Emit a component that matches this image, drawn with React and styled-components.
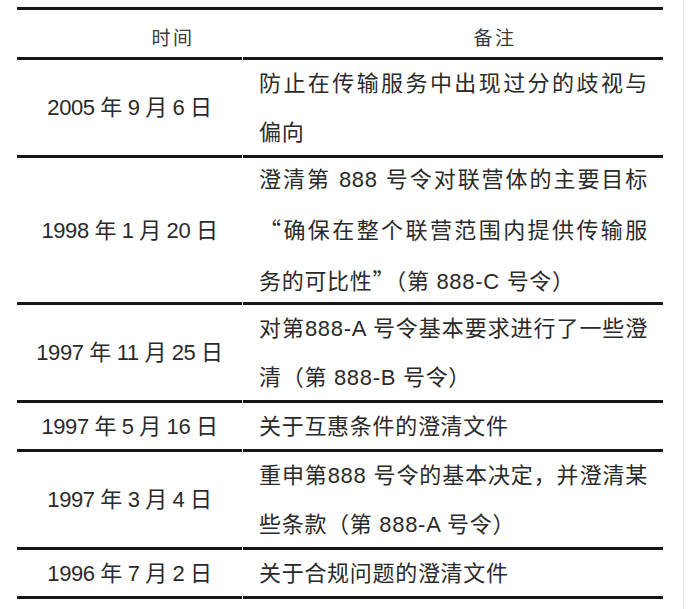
import React from "react";
import styled, { createGlobalStyle } from "styled-components";

const GlobalStyle = createGlobalStyle`
  html, body {
    margin: 0;
    padding: 0;
    background: #ffffff;
  }
  body {
    width: 688px;
    height: 609px;
    overflow: hidden;
    font-family: "Liberation Sans", "Noto Sans CJK SC", sans-serif;
    color: #2a2a2a;
  }
`;

const Page = styled.div`
  box-sizing: border-box;
  width: 684px;
  height: 609px;
  padding: 7px 0 0 17px;
  border-right: 1px solid #e8e8e8;
`;

const Table = styled.div`
  width: 646px;
  display: grid;
  grid-template-columns: 225px 420px;
  column-gap: 1px;
  border-top: 3px solid #161616;
`;

const Cell = styled.div`
  box-sizing: border-box;
  height: ${(p) => p.$lines * 49}px;
  border-bottom: 3px solid #161616;
  display: flex;
  flex-direction: column;
  justify-content: center;
`;

const HeadCell = styled.div`
  box-sizing: border-box;
  height: 50px;
  border-bottom: 3px solid #161616;
  display: flex;
  align-items: center;
  justify-content: center;
  padding: 5px 0 0 ${(p) => p.$indent}px;
  font-family: "Noto Sans CJK SC", sans-serif;
  font-size: 19px;
  letter-spacing: 2.5px;
  color: #3a3a3a;
`;

const DateCell = styled(Cell)`
  align-items: center;
  font-size: 22px;
  letter-spacing: -0.4px;
  line-height: 49px;
  white-space: nowrap;
`;

const NoteCell = styled(Cell)`
  padding-left: 16px;
  font-size: 22px;
  letter-spacing: 0.7px;
`;

const Line = styled.div`
  width: 389px;
  line-height: 49px;
  text-align: ${(p) => (p.$full ? "justify" : "left")};
  text-align-last: ${(p) => (p.$full ? "justify" : "left")};
`;

const Cjk = styled.span`
  font-family: "Noto Sans CJK SC", sans-serif;
`;

const rows = [
  {
    date: "2005 年 9 月 6 日",
    lines: [
      { t: "防止在传输服务中出现过分的歧视与", full: true },
      { t: "偏向" },
    ],
  },
  {
    date: "1998 年 1 月 20 日",
    lines: [
      { t: "澄清第 888 号令对联营体的主要目标", full: true },
      {
        t: (
          <>
            <Cjk>“</Cjk>确保在整个联营范围内提供传输服
          </>
        ),
        full: true,
      },
      {
        t: (
          <>
            务的可比性<Cjk>”</Cjk>（第 888-C 号令）
          </>
        ),
      },
    ],
  },
  {
    date: "1997 年 11 月 25 日",
    lines: [
      { t: "对第888-A 号令基本要求进行了一些澄", full: true },
      { t: "清（第 888-B 号令）" },
    ],
  },
  {
    date: "1997 年 5 月 16 日",
    lines: [{ t: "关于互惠条件的澄清文件" }],
  },
  {
    date: "1997 年 3 月 4 日",
    lines: [
      { t: "重申第888 号令的基本决定，并澄清某", full: true },
      { t: "些条款（第 888-A 号令）" },
    ],
  },
  {
    date: "1996 年 7 月 2 日",
    lines: [{ t: "关于合规问题的澄清文件" }],
  },
];

export default function App() {
  return (
    <>
      <GlobalStyle />
      <Page>
        <Table>
          <HeadCell $indent={87}>时间</HeadCell>
          <HeadCell $indent={84}>备注</HeadCell>
          {rows.map((r, i) => (
            <React.Fragment key={i}>
              <DateCell $lines={r.lines.length}>{r.date}</DateCell>
              <NoteCell $lines={r.lines.length}>
                {r.lines.map((l, j) => (
                  <Line key={j} $full={l.full}>
                    {l.t}
                  </Line>
                ))}
              </NoteCell>
            </React.Fragment>
          ))}
        </Table>
      </Page>
    </>
  );
}
